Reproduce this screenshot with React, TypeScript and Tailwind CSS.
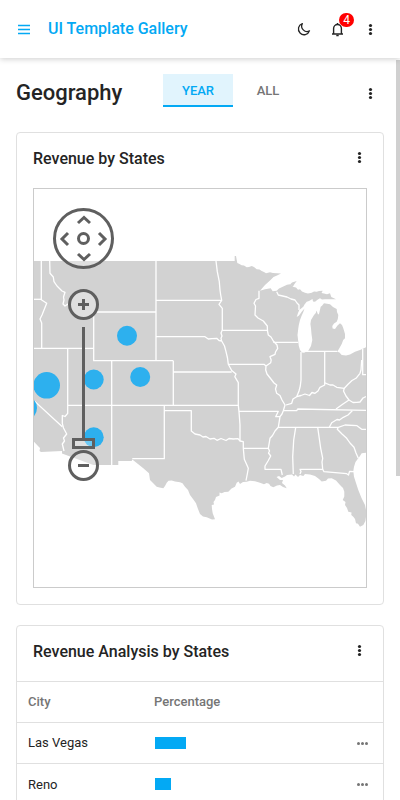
import React from "react";

const LAND =
  "M34 261H234.7V256H236L237.3 263L239.5 264L241.7 265.3L244 265.5L246.7 267.3L249 267L251.7 266L254 267L256.7 269.3L259.5 269.5L261.7 271L264 272L266 273.3L270 272.3L273 273L281 273.6L277 275.5L273.5 277L270 280.5L265 285L260 290.7L265 289.3L270.7 288.3L272.7 291.3L276.7 290.7L279 288.5L283.3 286.5L287 284.8L290 284.3L292.7 286.7L296 287.5L298 289.8L300 289.3L302 291.5L305 292.7L308 293.5L311.7 292.7L314 291.5L316.7 291.7L319 291L322.7 290.7L321.5 293L324 293.6L327 294.2L330 293.3L331.3 297L336 299.2L330 299.3L325 299.3L322 299.5L320 298.3L317.5 299.7L315 301.7L313 301.5L312.5 299L309 301L306.7 301.7L304.5 304.5L303.3 306.7L299.3 310L298 313L296.7 317L299 315.5L301.7 311.7L304.5 308.5L303.3 312L301.5 316L300 320L298.8 325L298.3 328.3L297.5 335L298.3 341.7L298.8 346L300 350L302 352.5L304 352.7L308.3 350.7L311 346L312.3 340L311.5 334L311 328.3L310.4 324L311 320L314 315L315.8 313L316.5 310.5L318 314.5L319 314L320.7 306.7L322 305.8L324 303.3L327 303.7L330 304.3L333 307L336.7 309L337 312L338.3 315L337.8 319L336.7 321.7L334 323.5L332.3 326L332.6 328.6L335 329L337.5 325.5L340 323.3L342 325L343.3 328.3L345 334L345 338.3L343.2 340L341.7 344L339.5 348L337.3 351.7L339.5 352.5L341.7 355L346 355.5L350 354.6L355 351.7L360 350L366 347.3V452.7L361.7 453.3L360 456L358.3 458.3L355.5 462L354 466.7L353.3 471L354 476.7L356 483L358.3 490L361.5 498L365 505L366 510V516.7L365.4 521L363.3 525L360 526.7L358 523.8L356 523.3L355 519L353.3 516.7L351.3 515L351.5 512.5L348.3 511.7L347 508L345 505L345.5 502L342.7 500L344.3 496.5L344.3 491.7L343 488L340 485L336 480.5L331.7 478.3L328 478.5L326 480.7L321.7 481.5L319 479L315 476L310 474.6L305 474L303.3 476L300 475L298 477L295.5 474.5L294 476.5L292 474.5L287 475L285 476.5L281.7 478L279 476L276.5 477L280 480L283 480L282 483L285 485.5L286.7 488.3L283 487L280 485L277 485.5L273.3 487.3L270.5 486L269 483.8L266.7 483L264 484.3L260 482.7L255 481.2L250 480.7L246.7 481.7L243 482L240 484L238.5 481.5L236.7 482.7L235 486.7L231.5 488.5L228.3 491.7L224.5 492L221.7 493.3L219.5 492.5L219.5 495.5L216 497L215 500L213.5 502L214 504.5L211.7 505L212 509L212.7 513.3L215 519.3L212 519.5L206.7 517.3L203 516.5L200 514L198 509L196 503.3L193 499L190 495L188 490L185 486.7L182.5 483.3L180 482.3L175 481.5L171.7 480.5L168.5 480.7L166.7 482.7L165 486L163.3 488.3L159.5 487.5L156.7 486.7L153 483L150 480L149 473.3L143.3 468.3L138 464L132.3 459.5L131.7 461H118.3V465H93.3L62 453.5V451L41 452L39.5 451L40 448L38 446L34 441.7Z";

const KEWEENAW = "M290 284.5L292 282.5L296.7 281L294.5 284L292.7 287Z";

const BORDERS = [
  "M41.3 261V299.7L46.7 303.3L44 310L42 315L40 319L41.7 323V348.3",
  "M34 299.3H41.3",
  "M49.7 261L50 273.3L53.3 277L54 281.7L57 286L60 289L62 291L65 292.3L63.5 297L64 300L63 304L65 306L68 304L70 309L73 315L80 318L90 317L93.7 312",
  "M93.7 312H156M34 348.3H93.7M93.7 312V360.7H173.3M156 261V360.7",
  "M67.7 348.3V413.3L65 416.5L62.3 415.5V423.3L63.5 428L66.7 434L63.5 438L64.5 441L62.3 444L64 451",
  "M34 400.7L62.3 426.7M111.7 360.7V465M67.7 405.3H238.3M173.3 360.7V405.3M173.3 372H231.7",
  "M156 300.3H221.7M156 336.7H205L208.3 339L212 338.7L216.7 338.3L219 340.5L221.7 341",
  "M216 261L217.3 271.7L219.3 281.7L220 290L220.7 295L221.7 300.3L219 304.3L222.3 308.3V330L221 333L222 336L221 338.3L221.7 341L224.5 346L226 351.7L227.5 358L228.3 364.3L231.7 370.5L236 374L234.8 376.7L238.3 382.7V405.3L239 411.7L240 425V441",
  "M222.3 330.3H268M228.3 364.3H264L266 366",
  "M259 290.7V298.3L256 299.5L254 303.3L255.5 306L255 315L258 318L263.3 321L267.3 326L267.5 331L268.3 335L271 337L273.3 341L277 345L277.7 348.3L275.5 352L275 354.3L270 356.7L271.2 360L270.7 362.7L266 366L265.7 370L267 374L271.7 380L274 383L276.7 385L275.5 389L276.7 393.3L280 395.5L282 400L285 405L283.3 410.7L282 414L280 416.7L278.3 427.3L275 431L272.5 435.5L270 438.3L268.3 448.3L269.5 451L268.5 453L270.7 456L268 461L265 466V469.3H281L282.3 475",
  "M276.7 291.7L278.3 295L287 297L291 299L295 300L297 303L299 305V310",
  "M273.3 342.3H298.3M301 352V380L300.3 386L299 391L296.7 396.7L293 399L291.7 403.3L286 405",
  "M304 351.3H337.3M324.7 351.3V385L320 387.3L318 391L315 393.3L312 392.5L309.5 395.5L305 394L301 395.5L296.7 396.7",
  "M324.3 382.7L330 385L333 385L336.7 387.3L344.3 388.3L348.3 384L352 380.5L356 378.3L360 373.3L361 370L361.7 360M362.7 349V374.7H366",
  "M344.3 388.3L343.5 391L346 396L349 400L343 404L336 409M349 400L353 402.5L356.7 402.3L360 402L363 398L366 396.5",
  "M283.3 410.7H296.7L297.7 409L366 410.3M239 411.3H278.3L275.7 416.7H280",
  "M278.3 427.3H338.3M329.3 427.3L331.7 422.7L337 419.5L339.5 420L343.3 417.3L348 415L352.3 410.7",
  "M338.3 427.3L345 425L357 425.7L361.7 429.3H366M338.3 427.3L337.3 429.3L342 434L346.7 438.3L350 443L354 447.3L356 453L358.3 458.3",
  "M295.7 427.3L293.7 440L292.7 456.7L293.3 474M317.7 427.3L319.5 440L320.7 448.3L322.7 458.3L322 462L322.7 469.3",
  "M300 474L301 471.5L300 469.3H322.7L324 471.7L346.7 473.7L348.5 475L349.5 471.5L354 471.7",
  "M132.3 458.7H164.3V405.3M164.3 410.7H191.3V431L195 434L200 435L203 437L206 436.5L210 439L214 438.3L217 440.3L221 438.5L226 440.5L229 438.5L233.3 439L238 438.6L240 441L243.3 441.7V448.3L244.3 459.3L246 463L248.3 468.3L247.3 474L246 480.7M243.3 448.3H268.3",
];

const MARKERS = [
  { x: 24, y: 408, r: 13 },
  { x: 46.7, y: 385.3, r: 13.3 },
  { x: 93.7, y: 379.5, r: 10 },
  { x: 127, y: 335.7, r: 10 },
  { x: 140.2, y: 377, r: 10 },
  { x: 93.7, y: 437.3, r: 10 },
];

const ROWS = [
  { city: "Las Vegas", width: 31 },
  { city: "Reno", width: 16 },
];

function DotsVertical() {
  return (
    <svg width="18" height="18" viewBox="0 0 18 18" fill="currentColor" aria-hidden="true">
      <circle cx="9.5" cy="5.5" r="1.6" />
      <circle cx="9.5" cy="9.5" r="1.6" />
      <circle cx="9.5" cy="13.5" r="1.6" />
    </svg>
  );
}

function MoreButton({ label }: { label: string }) {
  return (
    <button type="button" aria-label={label} className="flex h-8 w-7 items-center justify-center">
      <DotsVertical />
    </button>
  );
}

function Header() {
  return (
    <header className="relative z-10 flex h-[58px] shrink-0 items-center bg-white pr-4 pl-3 shadow-[0_1px_6px_rgba(0,0,0,0.2)]">
      <button type="button" aria-label="Menu" className="flex h-9 w-6 items-center justify-center text-[#03a9f4]">
        <svg width="18" height="18" viewBox="0 0 18 18" fill="none" stroke="currentColor" strokeWidth="1.3" aria-hidden="true">
          <path d="M3 5.5H15M3 9.5H15M3 13.5H15" />
        </svg>
      </button>
      <span className="ml-3 flex-1 text-base font-medium text-[#03a9f4]">UI Template Gallery</span>
      <div className="flex items-center gap-[5px]">
        <button type="button" aria-label="Dark theme" className="flex h-8 w-7 items-center justify-center">
          <svg width="18" height="18" viewBox="0 0 18 18" fill="none" stroke="currentColor" strokeWidth="1.3" strokeLinejoin="round" aria-hidden="true">
            <path d="M7.3 3.6A5.7 5.7 0 1 0 14.5 10.9A5.4 5.4 0 0 1 7.3 3.6Z" />
          </svg>
        </button>
        <button type="button" aria-label="Notifications" className="relative flex h-8 w-7 items-center justify-center">
          <svg width="18" height="18" viewBox="0 0 18 18" fill="none" stroke="currentColor" strokeWidth="1.4" aria-hidden="true">
            <path d="M4 14H15M5.6 14V8.6A3.9 4.1 0 0 1 13.4 8.6V14" />
            <path d="M9.5 3V4.5M8.3 15.5H10.7" />
          </svg>
          <span className="absolute top-0 right-[-3px] flex h-[14px] w-[15px] items-center justify-center rounded-full bg-[#ff0000] text-xs leading-none text-white">4</span>
        </button>
        <MoreButton label="More" />
      </div>
    </header>
  );
}

const chevron = "flex h-full w-full items-center justify-center";

function Chevron({ d }: { d: string }) {
  return (
    <svg width="18" height="18" viewBox="0 0 18 18" fill="none" stroke="currentColor" strokeWidth="3" aria-hidden="true">
      <path d={d} />
    </svg>
  );
}

function MapControls() {
  return (
    <div className="absolute top-[19px] left-[19px] flex flex-col items-center text-[#5f5f5f]">
      <div className="grid h-[61px] w-[61px] grid-cols-[18px_19px_18px] grid-rows-[18px_19px_18px] rounded-full border-3 border-[#5f5f5f] bg-white/30">
        <button type="button" aria-label="Pan up" className={`${chevron} col-start-2`}>
          <Chevron d="M3 12L9 6.5L15 12" />
        </button>
        <button type="button" aria-label="Pan left" className={`${chevron} col-start-1`}>
          <Chevron d="M12 3L6 9L12 15" />
        </button>
        <button type="button" aria-label="Reset view" className={chevron}>
          <span className="h-[13px] w-[13px] rounded-full border-3 border-[#5f5f5f]" />
        </button>
        <button type="button" aria-label="Pan right" className={chevron}>
          <Chevron d="M6 3L12 9L6 15" />
        </button>
        <button type="button" aria-label="Pan down" className={`${chevron} col-start-2`}>
          <Chevron d="M3 6L9 11.5L15 6" />
        </button>
      </div>
      <button type="button" aria-label="Zoom in" className="mt-5 flex h-[31px] w-[31px] items-center justify-center rounded-full border-3 border-[#5f5f5f] bg-white/30">
        <svg width="11" height="11" viewBox="0 0 11 11" stroke="currentColor" strokeWidth="3" aria-hidden="true">
          <path d="M0 5.5H11M5.5 0V11" />
        </svg>
      </button>
      <input
        type="range"
        aria-label="Zoom level"
        min={0}
        max={10}
        defaultValue={0}
        className="mt-[7px] h-[122px] w-[23px] appearance-none bg-[linear-gradient(#5f5f5f,#5f5f5f)] bg-[length:3px_111px] bg-top bg-no-repeat [direction:rtl] [writing-mode:vertical-lr] [&::-webkit-slider-thumb]:h-[11px] [&::-webkit-slider-thumb]:w-[23px] [&::-webkit-slider-thumb]:appearance-none [&::-webkit-slider-thumb]:border-3 [&::-webkit-slider-thumb]:border-[#5f5f5f] [&::-webkit-slider-thumb]:bg-white/30"
      />
      <button type="button" aria-label="Zoom out" className="mt-px flex h-[31px] w-[31px] items-center justify-center rounded-full border-3 border-[#5f5f5f] bg-white/30">
        <svg width="11" height="3" viewBox="0 0 11 3" stroke="currentColor" strokeWidth="3" aria-hidden="true">
          <path d="M0 1.5H11" />
        </svg>
      </button>
    </div>
  );
}

function StatesMap() {
  return (
    <div className="relative mx-4 mb-4 h-[400px] overflow-hidden border border-[#cbcbcb]">
      <svg className="h-full w-full" viewBox="34 189 332 398" preserveAspectRatio="xMidYMid slice" role="img" aria-label="Revenue by states map">
        <path d={LAND} fill="#d2d2d2" />
        <path d={KEWEENAW} fill="#d2d2d2" />
        <g fill="none" stroke="#ffffff" strokeWidth="1.3" strokeLinejoin="round">
          {BORDERS.map((d) => (
            <path key={d} d={d} />
          ))}
        </g>
        <g fill="#2db0ee">
          {MARKERS.map((m) => (
            <circle key={`${m.x}-${m.y}`} cx={m.x} cy={m.y} r={m.r} />
          ))}
        </g>
      </svg>
      <MapControls />
    </div>
  );
}

function CardHeader({ title }: { title: string }) {
  return (
    <div className="flex h-[55px] items-start justify-between pt-2 pr-[10px] pl-4">
      <h2 className="text-base leading-[35px] font-medium">{title}</h2>
      <MoreButton label={`${title} options`} />
    </div>
  );
}

export default function App() {
  return (
    <div className="relative flex h-screen flex-col overflow-hidden bg-white font-[Roboto,sans-serif] text-[#242424]">
      <Header />
      <main className="px-4 pt-4">
        <div className="flex items-start">
          <h1 className="w-[147px] shrink-0 text-[22px] leading-[38px] font-medium">Geography</h1>
          <div role="tablist" className="flex flex-1 text-[13px] font-medium">
            <button type="button" role="tab" aria-selected="true" className="h-[33px] w-[70px] border-b-2 border-[#03a9f4] bg-[#e1f4fd] pt-0.5 text-[#03a9f4]">
              YEAR
            </button>
            <button type="button" role="tab" aria-selected="false" className="h-[33px] w-[70px] border-b-2 border-transparent pt-0.5 text-[#757575]">
              ALL
            </button>
          </div>
          <div className="pt-[3px]">
            <MoreButton label="Page options" />
          </div>
        </div>

        <section className="mt-5 rounded border border-[#e0e0e0]">
          <CardHeader title="Revenue by States" />
          <StatesMap />
        </section>

        <section className="mt-5 rounded border border-[#e0e0e0]">
          <CardHeader title="Revenue Analysis by States" />
          <table className="w-full table-fixed text-left text-[13px]">
            <thead>
              <tr className="h-[41px] border-t border-[#e0e0e0] text-[#757575]">
                <th className="w-[126px] pl-[11px] font-medium">City</th>
                <th className="pl-[11px] font-medium">Percentage</th>
                <th className="w-[41px]" aria-label="Actions" />
              </tr>
            </thead>
            <tbody>
              {ROWS.map((row) => (
                <tr key={row.city} className="h-[41px] border-t border-[#e0e0e0]">
                  <td className="pl-[11px]">{row.city}</td>
                  <td className="pl-3">
                    <div className="h-3 bg-[#03a9f4]" style={{ width: row.width }} />
                  </td>
                  <td>
                    <button type="button" aria-label={`${row.city} actions`} className="flex h-6 w-10 items-center justify-center text-[#757575]">
                      <svg width="18" height="18" viewBox="0 0 18 18" fill="currentColor" aria-hidden="true">
                        <circle cx="5.5" cy="9.5" r="1.5" />
                        <circle cx="9.5" cy="9.5" r="1.5" />
                        <circle cx="13.5" cy="9.5" r="1.5" />
                      </svg>
                    </button>
                  </td>
                </tr>
              ))}
            </tbody>
          </table>
        </section>
      </main>
      <div className="absolute top-[60px] right-0 h-[416px] w-1 bg-[#d0d0d0]" />
    </div>
  );
}
